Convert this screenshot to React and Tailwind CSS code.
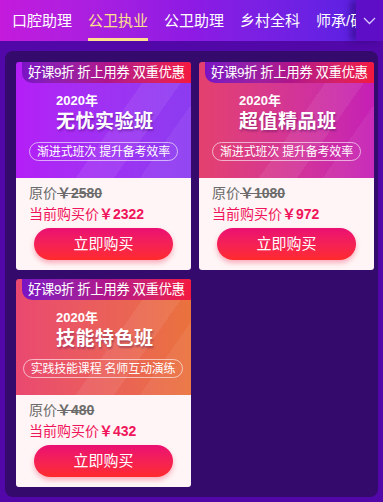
import React from 'react';

const tabs = ['口腔助理', '公卫执业', '公卫助理', '乡村全科', '师承/确有专长'];

const courses = [
  {
    title: '无忧实验班',
    slogan: '渐进式班次 提升备考效率',
    price: '2580',
    now: '2322',
    bg: 'bg-gradient-to-r from-[#b41ef6] to-[#8b3cf0]',
    pill: 'w-[149px] ml-[13px]',
  },
  {
    title: '超值精品班',
    slogan: '渐进式班次 提升备考效率',
    price: '1080',
    now: '972',
    bg: 'bg-gradient-to-r from-[#e4406e] to-[#c51eb6]',
    pill: 'w-[149px] ml-[13px]',
  },
  {
    title: '技能特色班',
    slogan: '实践技能课程 名师互动演练',
    price: '480',
    now: '432',
    bg: 'bg-gradient-to-r from-[#ea4870] to-[#ea723c]',
    pill: 'w-[160px] ml-[7px]',
  },
];

const CourseCard = ({ course }) => {
  return (
    <div className="w-[175px] rounded-[3px] overflow-hidden">
      {/* top banner */}
      <div className={`relative h-[116px] ${course.bg}`}>
        <div className="absolute inset-0 bg-[linear-gradient(125deg,transparent_55%,rgba(255,255,255,0.07)_55%,rgba(255,255,255,0.07)_70%,transparent_70%,transparent_80%,rgba(255,255,255,0.06)_80%)]" />
        <div className="relative ml-[6px] h-[21px] rounded-bl-[10px] bg-gradient-to-r from-[#7a12c4] via-[#b0148a] to-[#f4183e] flex items-center pl-[6px] text-white text-[13.5px] leading-none tracking-[-0.5px] whitespace-nowrap">
          好课9折 折上用券 双重优惠
        </div>
        <div className="relative pl-[40px] pt-[11px] text-white">
          <div className="text-[13px] font-bold leading-[13px]">2020年</div>
          <div className="mt-[5px] text-[19px] font-bold leading-[20px] tracking-[0.5px] [text-shadow:1px_2px_2px_rgba(60,0,80,0.35)]">
            {course.title}
          </div>
        </div>
        <div
          className={`relative mt-[10px] h-[19px] ${course.pill} rounded-full border border-white/60 flex items-center justify-center text-white text-[12px] leading-none whitespace-nowrap tracking-[-0.2px]`}
        >
          {course.slogan}
        </div>
      </div>
      {/* bottom info */}
      <div className="h-[92px] bg-[#fff5f6] pt-[7px]">
        <div className="pl-[13px] text-[14px] leading-[16px] text-[#6b6b6b]">
          原价<span className="line-through font-bold">￥{course.price}</span>
        </div>
        <div className="pl-[13px] mt-[5px] text-[14px] leading-[16px] text-[#f0145a]">
          当前购买价<span className="font-bold">￥{course.now}</span>
        </div>
        <button className="block mx-auto mt-[6px] w-[139px] h-[32px] rounded-full bg-gradient-to-b from-[#ea0e72] to-[#ff2a2a] text-white text-[15px] shadow-[0_3px_5px_rgba(240,40,80,0.35)]">
          立即购买
        </button>
      </div>
    </div>
  );
};

export default function App() {
  return (
    <div className="w-[383px] h-[502px] overflow-hidden bg-[#5208a8] font-['Liberation_Sans','Noto_Sans_CJK_SC',sans-serif]">
      {/* tab bar */}
      <div className="relative h-[41px] flex bg-gradient-to-r from-[#c41adc] via-[#8e1ae4] to-[#5420e2]">
        <div className="flex-1 overflow-hidden flex gap-[16px] pl-[12px] whitespace-nowrap">
          {tabs.map((tab, i) => (
            <div
              key={tab}
              className={`relative h-[41px] flex items-center text-[15px] pt-[1px] ${i === 1 ? 'text-[#ffe08c]' : 'text-white'}`}
            >
              {tab}
              {i === 1 && <div className="absolute left-0 right-0 bottom-0 h-[3px] bg-[#ffe08c]" />}
            </div>
          ))}
        </div>
        <div className="w-[27px] h-[41px] bg-[#5e0ec6] flex items-center justify-center shadow-[-6px_0_6px_rgba(40,0,100,0.45)]">
          <svg width="13" height="8" viewBox="0 0 13 8" fill="none">
            <path d="M1 1l5.5 5.5L12 1" stroke="#d9c8ff" strokeWidth="1.3" />
          </svg>
        </div>
      </div>

      {/* course panel */}
      <div className="mx-[5px] mt-[10px] h-[446px] rounded-[8px] bg-[#340a6c] pt-[11px] pl-[11px]">
        <div className="grid grid-cols-[175px_175px] gap-x-[8px] gap-y-[9px]">
          {courses.map((c) => (
            <CourseCard key={c.title} course={c} />
          ))}
        </div>
      </div>
    </div>
  );
}
